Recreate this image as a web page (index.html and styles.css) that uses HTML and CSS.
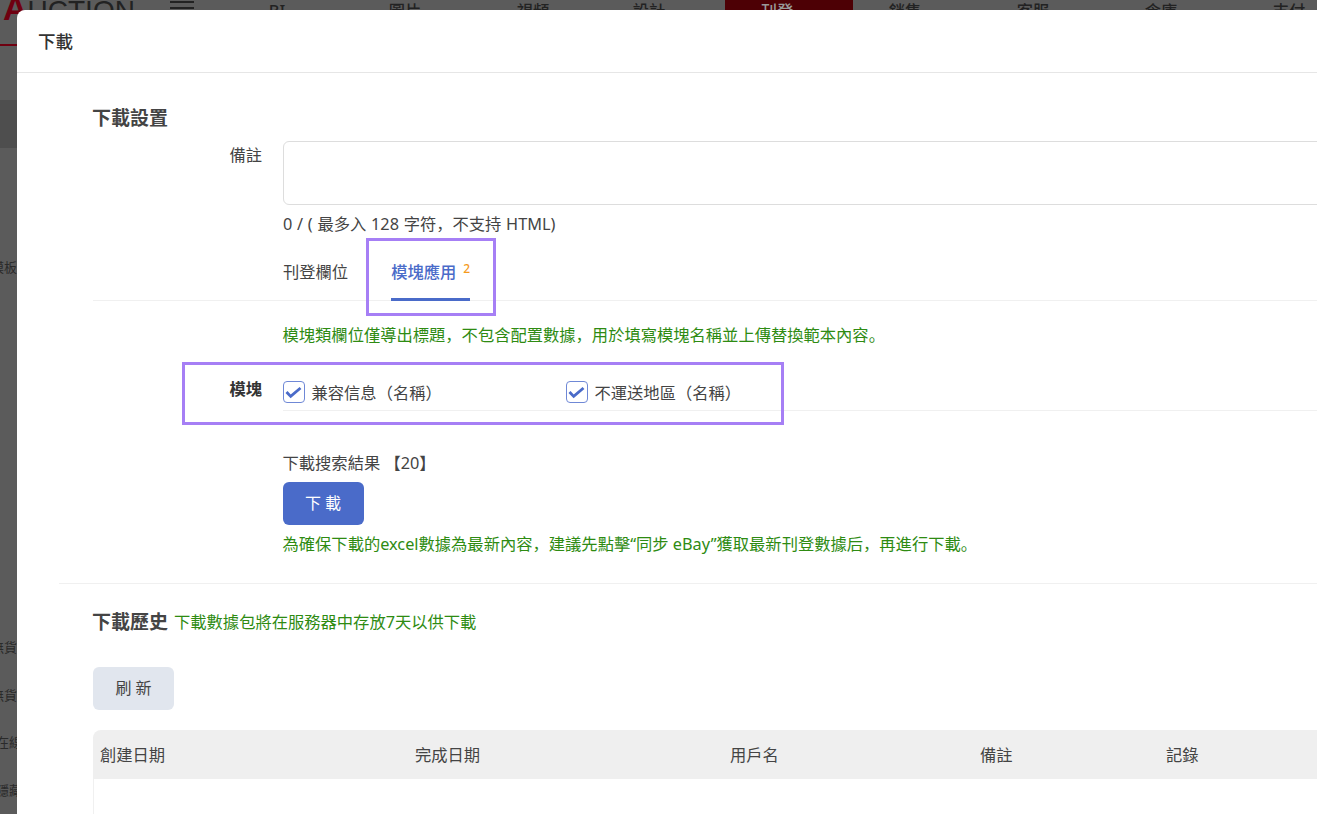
FILE: index.html
```html
<!DOCTYPE html>
<html lang="zh-Hans">
<head>
  <meta charset="UTF-8" />
  <title>下載</title>
  <link rel="stylesheet" href="styles.css">
</head>
<body>
<div class="page">
  <header class="topbar">
    <div class="logo"><span class="logo-a">A</span>UCTION</div>
    <div class="burger"><i></i><i></i><i></i></div>
    <nav class="nav">
      <a>BI</a>
      <a>圖片</a>
      <a>視頻</a>
      <a>設計<b class="caret"></b></a>
      <a class="active">刊登<b class="caret"></b></a>
      <a>銷售<b class="caret"></b></a>
      <a>客服<b class="caret"></b></a>
      <a>倉庫<b class="caret"></b></a>
      <a>支付<b class="caret"></b></a>
    </nav>
  </header>
  <aside class="sidebar">
    <div class="side-active"></div>
    <div class="side-item side-tpl">模板</div>
    <div class="side-item">無貨</div>
    <div class="side-item">無貨</div>
    <div class="side-item side-shift">在線</div>
    <div class="side-item side-shift">隱藏</div>
  </aside>
</div>

<div class="modal">
  <div class="modal-header">下載</div>
  <div class="modal-body">
    <h3 class="section-title">下載設置</h3>
    <div class="form-row">
      <label class="form-label">備註</label>
      <div class="form-field">
        <div class="textarea"></div>
        <div class="counter">0 / ( 最多入 128 字符，不支持 HTML)</div>
      </div>
    </div>

    <div class="tabs">
      <div class="tab">刊登欄位</div>
      <div class="tab tab-active">模塊應用<sup class="tab-count">2</sup></div>
    </div>

    <p class="hint hint-tabs">模塊類欄位僅導出標題，不包含配置數據，用於填寫模塊名稱並上傳替換範本內容。</p>

    <div class="form-row module-row">
      <label class="form-label form-label-bold">模塊</label>
      <div class="checks">
        <label class="check">
          <svg class="check-box" viewBox="0 0 22 22" width="22" height="22"><rect x="0.5" y="0.5" width="21" height="21" rx="3.5" fill="#fff" stroke="#6f88d6"/><path d="M3.5 11l4.2 4.4L17.5 7" fill="none" stroke="#4a6bc9" stroke-width="2.8"/></svg>
          兼容信息（名稱）
        </label>
        <label class="check">
          <svg class="check-box" viewBox="0 0 22 22" width="22" height="22"><rect x="0.5" y="0.5" width="21" height="21" rx="3.5" fill="#fff" stroke="#6f88d6"/><path d="M3.5 11l4.2 4.4L17.5 7" fill="none" stroke="#4a6bc9" stroke-width="2.8"/></svg>
          不運送地區（名稱）
        </label>
      </div>
    </div>

    <div class="download-box">
      <div class="result-count">下載搜索結果 【20】</div>
      <button class="btn btn-primary">下 載</button>
      <p class="hint">為確保下載的excel數據為最新內容，建議先點擊“同步 eBay”獲取最新刊登數據后，再進行下載。</p>
    </div>

    <div class="divider"></div>

    <div class="history-title">
      <h3 class="section-title">下載歷史</h3>
      <span class="hint">下載數據包將在服務器中存放7天以供下載</span>
    </div>

    <button class="btn btn-light">刷 新</button>

    <div class="table">
      <div class="table-head">
        <span class="col-created">創建日期</span>
        <span class="col-done">完成日期</span>
        <span class="col-user">用戶名</span>
        <span class="col-note">備註</span>
        <span class="col-log">記錄</span>
      </div>
      <div class="table-body"></div>
    </div>
  </div>
</div>

<!-- 標註框 -->
<div class="mark mark-tab"></div>
<div class="mark mark-module"></div>
</body>
</html>
```

FILE: styles.css
```css
html, body {
  margin: 0;
  padding: 0;
  height: 100%;
  overflow: hidden;
}
body {
  font-family: "Noto Sans", "Noto Sans CJK SC", sans-serif;
  font-size: 16.3px;
  color: #444;
  background-color: #5b5b5b;
  text-spacing-trim: space-all;
}
.page {
  height: 814px;
  background-color: #5b5b5b;
  color: #222;
}
.topbar {
  display: flex;
  height: 44px;
  border-bottom: 2px solid #6f0010;
  overflow: hidden;
}
.logo {
  width: 167px;
  flex: none;
  margin-top: -11px;
  padding-left: 3px;
  font-family: "Liberation Sans", sans-serif;
  font-size: 28px;
  line-height: 38px;
  color: #222;
}
.logo-a {
  color: #6f0010;
  font-size: 34px;
  font-weight: 700;
}
.burger {
  width: 43px;
  flex: none;
  display: flex;
  flex-direction: column;
  gap: 4px;
  padding-top: 1px;
}
.burger i {
  display: block;
  width: 24px;
  height: 2px;
  background-color: #222;
}
.nav {
  display: flex;
}
.nav a {
  width: 128px;
  height: 44px;
  display: flex;
  justify-content: center;
  line-height: 22px;
  font-weight: 500;
  color: #222;
}
.nav a.active {
  background-color: #4d0005;
  color: #999;
}
.caret {
  width: 24px;
}
.sidebar {
  width: 17px;
  overflow: hidden;
  font-size: 13px;
  color: #2a2a2a;
}
.side-active {
  height: 48px;
  margin-top: 54px;
  background-color: #4e4e4e;
}
.side-item {
  width: 17px;
  direction: rtl;
  white-space: nowrap;
  line-height: 24px;
  margin-bottom: 23.5px;
}
.side-shift {
  width: 22px;
}
.side-tpl {
  margin-top: 107px;
  margin-bottom: 356px;
}

.modal {
  position: absolute;
  left: 17px;
  top: 10px;
  width: 1400px;
  height: 900px;
  background-color: #fff;
  border-radius: 8px 0 0 0;
}
.modal-header {
  height: 62px;
  padding-left: 21px;
  line-height: 62px;
  font-size: 17.5px;
  font-weight: 500;
  color: #333;
  border-bottom: 1px solid #e6e6e6;
}
.modal-body {
  padding: 31px 0 0 76px;
}
.section-title {
  margin: 0 0 0 -1px;
  font-size: 19px;
  line-height: 28px;
  font-weight: 700;
  color: #444;
}
.form-row {
  display: flex;
  margin-top: 9px;
}
.form-label {
  width: 169px;
  flex: none;
  text-align: right;
  line-height: 28px;
  margin-right: 21px;
}
.form-label-bold {
  font-weight: 700;
  color: #333;
}
.form-field {
  flex: 1;
}
.textarea {
  height: 62px;
  border: 1px solid #ddd;
  border-radius: 6px;
}
.counter {
  margin-top: 8px;
  line-height: 22px;
  word-spacing: 0.5px;
}
.tabs {
  display: flex;
  margin-top: 10px;
  padding-left: 190px;
  height: 55px;
  border-bottom: 1px solid #f0f0f0;
}
.tab {
  line-height: 54px;
  height: 56px;
  box-sizing: border-box;
  margin-right: 43px;
}
.tab-active {
  color: #4a6bc9;
  font-weight: 500;
  border-bottom: 3px solid #4a6bc9;
}
.tab-count {
  color: #f59a1c;
  font-size: 12px;
  font-weight: 500;
  line-height: 1;
  margin-left: 7px;
  vertical-align: 5px;
}
.hint {
  margin: 0;
  color: #2e8b12;
  line-height: 22px;
}
.hint-tabs {
  margin: 23px 0 0 189.5px;
}
.module-row {
  margin-top: 32px;
}
.module-row .form-label {
  line-height: 22px;
}
.checks {
  flex: 1;
  display: flex;
  height: 29px;
  padding-top: 3px;
  border-bottom: 1px solid #f0f0f0;
}
.check {
  width: 283px;
  display: flex;
  gap: 6.5px;
  align-items: flex-start;
  line-height: 24px;
}
.check-box {
  flex: none;
}
.download-box {
  margin: 41px 0 0 189.5px;
}
.result-count {
  line-height: 22px;
}
.btn {
  display: block;
  width: 81px;
  height: 43px;
  border: none;
  border-radius: 6px;
  padding: 0 0 3px;
  font-family: inherit;
  font-size: 16px;
}
.btn-primary {
  margin: 8px 0 8px;
  background-color: #4a6bc9;
  color: #fff;
}
.btn-light {
  margin-top: 31px;
  background-color: #e1e6ee;
  color: #444;
}
.divider {
  height: 1px;
  margin: 28px 0 0 -34px;
  background-color: #f0f0f0;
}
.history-title {
  display: flex;
  align-items: center;
  gap: 6px;
  margin-top: 24px;
}
.table {
  margin-top: 20px;
}
.table-head {
  display: flex;
  height: 49px;
  line-height: 50px;
  padding-left: 7px;
  background-color: #efefef;
  border-radius: 8px 0 0 0;
}
.table-head span {
  flex: none;
}
.col-created { width: 315px; }
.col-done { width: 315px; }
.col-user { width: 250px; }
.col-note { width: 186px; }
.col-log { width: 100px; }
.table-body {
  height: 100px;
  border-left: 1px solid #f0f0f0;
}

.mark {
  position: absolute;
  box-sizing: border-box;
  border: 3px solid #a67ff5;
}
.mark-tab {
  left: 366px;
  top: 238px;
  width: 130px;
  height: 78px;
}
.mark-module {
  left: 182px;
  top: 362px;
  width: 602px;
  height: 63px;
}
```
